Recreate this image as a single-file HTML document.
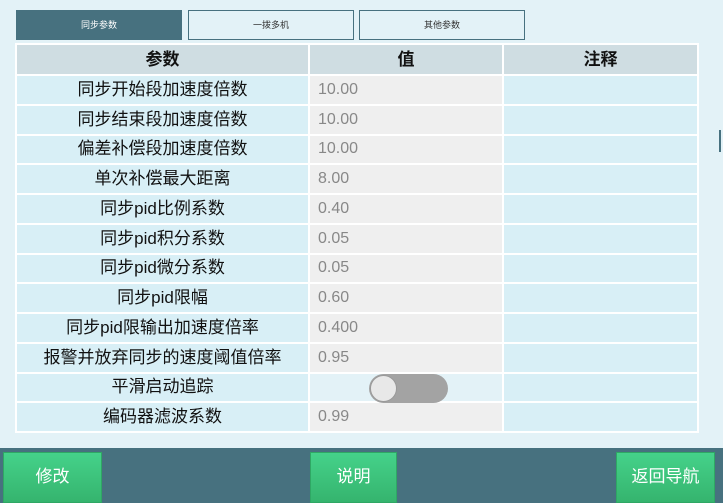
<!DOCTYPE html><html><head><style>
body{margin:0;width:723px;height:503px;background:#e3f2f7;position:relative;overflow:hidden;font-family:"Liberation Sans","Noto Sans CJK SC",sans-serif}
.tab{position:absolute;top:10px;height:30px;box-sizing:border-box;border:1px solid #47717f;font-size:9px;color:#333;text-align:center;line-height:28px}
table{position:absolute;left:15px;top:43px;border-collapse:collapse}
td{border:2px solid #fff;box-sizing:border-box;height:29.75px;padding:0;font-size:17px;line-height:20px}
td.a{width:293px;text-align:center;background:#d8eff6;color:#111}
td.b{width:194px;background:#efefef;color:#888;padding-left:8px;font-size:16px}
td.c{width:195px;background:#d8eff6}
tr.h td{background:#cfdde2;text-align:center;font-weight:bold;color:#111;font-size:17px;height:31px;padding:0}
.bar{position:absolute;left:0;top:448px;width:723px;height:55px;background:#47717f}
.btn{position:absolute;top:452px;height:51px;background:linear-gradient(#45d28a,#35b46e);border:1px solid #2fa764;box-sizing:border-box;color:#fff;font-size:17px;text-align:center;line-height:48px}
</style></head><body>
<div class="tab" style="left:16px;width:166px;background:#47717f;color:#fff">同步参数</div>
<div class="tab" style="left:188px;width:166px">一拨多机</div>
<div class="tab" style="left:359px;width:166px">其他参数</div>
<table>
<tr class="h"><td>参数</td><td>值</td><td>注释</td></tr>
<tr><td class="a">同步开始段加速度倍数</td><td class="b">10.00</td><td class="c"></td></tr>
<tr><td class="a">同步结束段加速度倍数</td><td class="b">10.00</td><td class="c"></td></tr>
<tr><td class="a">偏差补偿段加速度倍数</td><td class="b">10.00</td><td class="c"></td></tr>
<tr><td class="a">单次补偿最大距离</td><td class="b">8.00</td><td class="c"></td></tr>
<tr><td class="a">同步pid比例系数</td><td class="b">0.40</td><td class="c"></td></tr>
<tr><td class="a">同步pid积分系数</td><td class="b">0.05</td><td class="c"></td></tr>
<tr><td class="a">同步pid微分系数</td><td class="b">0.05</td><td class="c"></td></tr>
<tr><td class="a">同步pid限幅</td><td class="b">0.60</td><td class="c"></td></tr>
<tr><td class="a">同步pid限输出加速度倍率</td><td class="b">0.400</td><td class="c"></td></tr>
<tr><td class="a">报警并放弃同步的速度阈值倍率</td><td class="b">0.95</td><td class="c"></td></tr>
<tr><td class="a">平滑启动追踪</td><td class="b" style="background:#e3f2f7;position:relative"><div style="position:absolute;left:59px;top:0;width:79px;height:29px;border-radius:15px;background:#a3a3a3"><div style="position:absolute;left:1px;top:1px;width:27px;height:27px;border-radius:50%;background:#e8e8e8;border:1px solid #999;box-sizing:border-box"></div></div></td><td class="c"></td></tr>
<tr><td class="a">编码器滤波系数</td><td class="b">0.99</td><td class="c"></td></tr>
</table>
<div style="position:absolute;left:719px;top:130px;width:2px;height:22px;background:#47717f"></div>
<div class="bar"></div>
<div class="btn" style="left:3px;width:99px">修改</div>
<div class="btn" style="left:310px;width:87px">说明</div>
<div class="btn" style="left:616px;width:99px">返回导航</div>
</body></html>
